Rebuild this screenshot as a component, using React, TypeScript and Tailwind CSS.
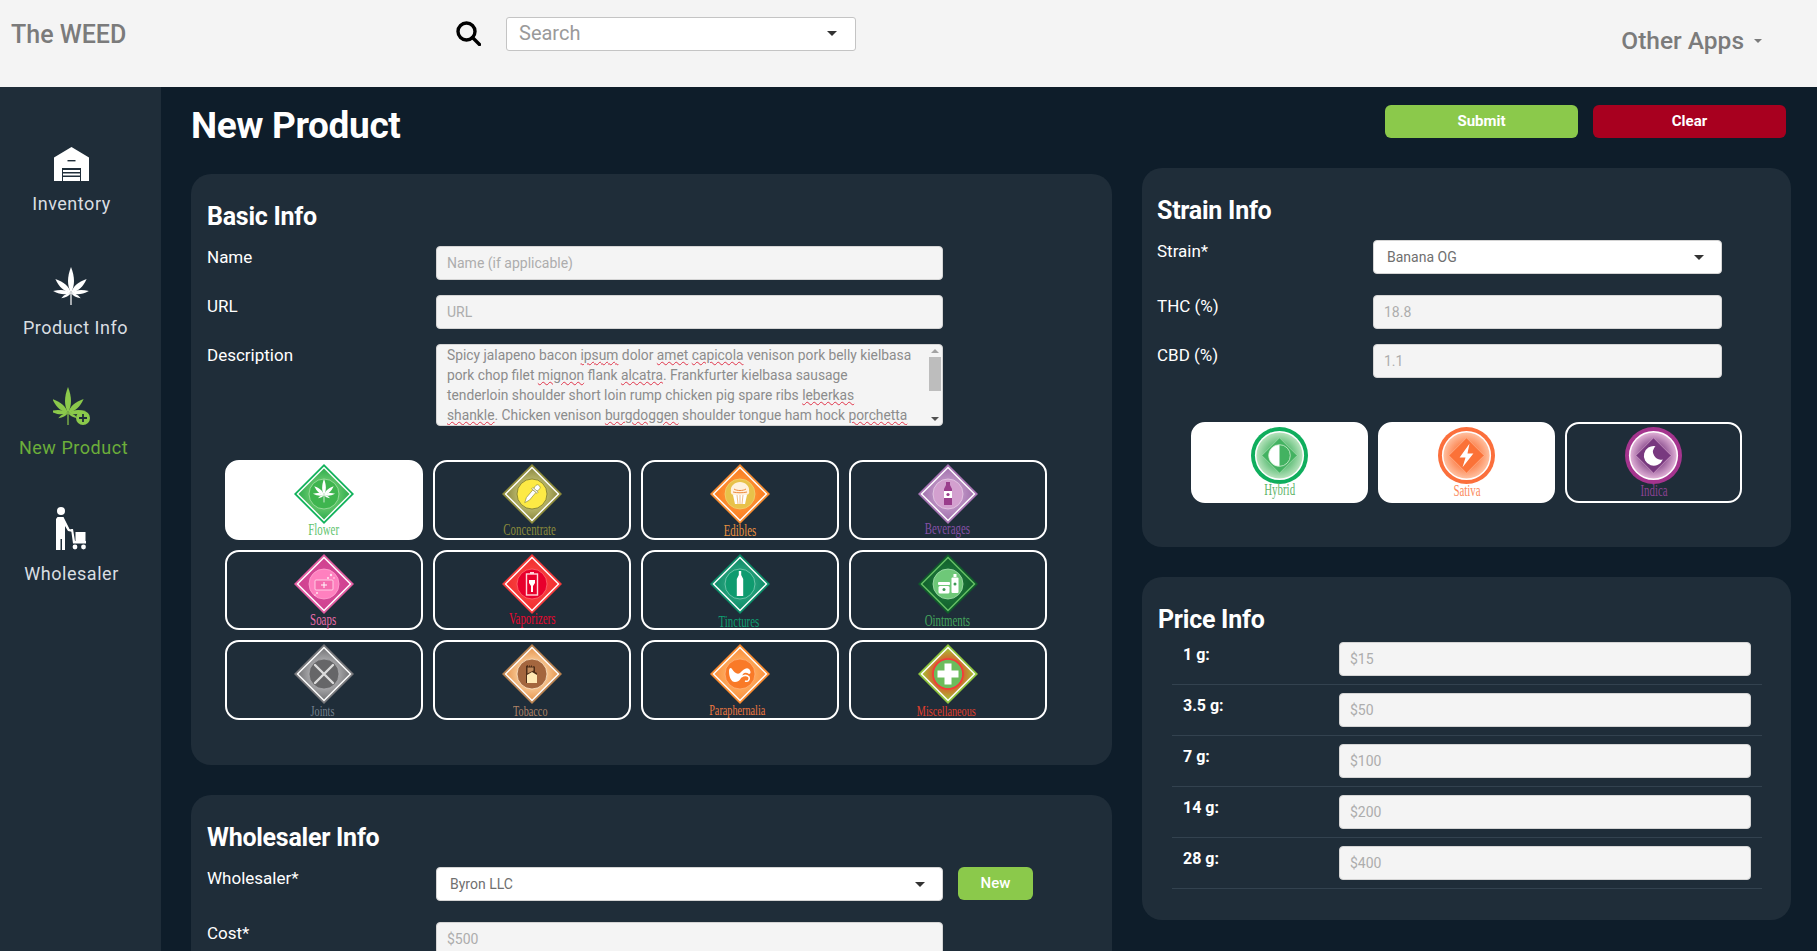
import type { ReactNode } from "react";

const sans = "font-['Roboto',sans-serif]";

function Leaf({ x, y, s, color }: { x: number; y: number; s: number; color: string }) {
	const blades = [
		[0, 26, 4],
		[-48, 21, 3.6],
		[48, 21, 3.6],
		[-84, 18, 2.8],
		[84, 18, 2.8],
		[-118, 11, 1.7],
		[118, 11, 1.7],
	];
	return (
		<g transform={`translate(${x} ${y}) scale(${s})`} fill={color}>
			{blades.map(([a, l, w]) => (
				<path
					key={a}
					transform={`rotate(${a})`}
					d={`M0 0C${-w} ${-l * 0.3} ${-w} ${-l * 0.6} 0 ${-l}C${w} ${-l * 0.6} ${w} ${-l * 0.3} 0 0Z`}
				/>
			))}
			<rect x="-0.6" y="0" width="1.2" height="12" />
		</g>
	);
}

function Badge(props: {
	id: string;
	outer: string;
	line?: string;
	inner: string;
	edge: string;
	disc: string;
	ring: string;
	children: ReactNode;
}) {
	const { id, outer, line = "#ffffff", inner, edge, disc, ring, children } = props;
	return (
		<svg viewBox="0 0 60 60" className="h-[60px] w-[60px] shrink-0">
			<defs>
				<radialGradient id={id}>
					<stop offset="30%" stopColor={inner} />
					<stop offset="100%" stopColor={edge} />
				</radialGradient>
			</defs>
			<polygon points="30,0 60,30 30,60 0,30" fill={outer} />
			<polygon points="30,2.5 57.5,30 30,57.5 2.5,30" fill={line} />
			<polygon points="30,4.5 55.5,30 30,55.5 4.5,30" fill={`url(#${id})`} />
			<circle cx="30" cy="30" r="15" fill={disc} stroke={ring} strokeWidth="0.8" />
			{children}
		</svg>
	);
}

const tiles = [
	{
		name: "Flower",
		active: true,
		text: "text-[#5fc46f]",
		label: "text-[16px] mt-[-2px]",
		badge: (
			<Badge id="b-flower" outer="#0fb25a" inner="#7ed27a" edge="#2fae4e" disc="#3fb54f" ring="#a5dfa5">
				<Leaf x={30} y={31} s={0.62} color="#ffffff" />
			</Badge>
		),
	},
	{
		name: "Concentrate",
		text: "text-[#8b8a3c]",
		label: "text-[16px] mt-[-2px] ml-[-4px]",
		badge: (
			<Badge id="b-conc" outer="#8d8a3a" inner="#cfcd80" edge="#8f8c44" disc="#fdea45" ring="#77762f">
				<g transform="rotate(40 30 30)" fill="#ffffff" stroke="#77762f" strokeWidth="0.5">
					<rect x="27.5" y="19" width="5" height="6" rx="2" />
					<rect x="26.5" y="24.5" width="7" height="1.8" />
					<path d="M28 26.3h4v10l-2 5-2-5z" />
				</g>
			</Badge>
		),
	},
	{
		name: "Edibles",
		text: "text-[#e8903f]",
		label: "text-[16px] mt-[-1px]",
		badge: (
			<Badge id="b-edi" outer="#f58a2f" inner="#ff9a3a" edge="#fb7c22" disc="#e8c24a" ring="#f2d070">
				<path d="M21 27c-1-5 4-9 9-9s10 4 9 9c1 3-2 4-3 4H24c-1 0-4-1-3-4z" fill="#fff1dd" />
				<path d="M24 25c3 2 9 2 12 0M23 28c4 1 10 1 14 0" stroke="#ef8a3c" strokeWidth="1" fill="none" />
				<path d="M23 31h14l-2 9H25z" fill="#ffffff" />
				<path d="M27 31l1 9M30 31v9M33 31l-1 9" stroke="#e8a050" strokeWidth="0.7" />
			</Badge>
		),
	},
	{
		name: "Beverages",
		text: "text-[#8450a6]",
		label: "text-[16px] mt-[-3px] ml-[-2px]",
		badge: (
			<Badge id="b-bev" outer="#a874b4" inner="#c9a0ce" edge="#a374ae" disc="#d3a0cf" ring="#e6cbe6">
				<path d="M28 18h4v3l2 4v16h-8V25l2-4z" fill="#9a3d8c" />
				<rect x="26" y="27" width="8" height="7" fill="#ffffff" />
				<circle cx="30" cy="30.5" r="1.6" fill="#9a3d8c" />
			</Badge>
		),
	},
	{
		name: "Soaps",
		text: "text-[#ea6cab]",
		label: "text-[16px] mt-[-2px] ml-[-2px]",
		badge: (
			<Badge id="b-soap" outer="#e35ca2" inner="#d44a98" edge="#d0408f" disc="#ff80bf" ring="#ffa7d3">
				<rect x="21" y="26" width="18" height="10" rx="1" fill="#f56cae" stroke="#ffd7ea" strokeWidth="0.9" />
				<path d="M30 28v6M27 31h6" stroke="#ffffff" strokeWidth="1" />
				<circle cx="37" cy="21" r="1.2" fill="#ffe4f1" />
				<circle cx="34" cy="24" r="1" fill="#ffe4f1" />
				<circle cx="40" cy="24" r="0.8" fill="#ffe4f1" />
				<circle cx="23" cy="39" r="1" fill="#ffe4f1" />
				<circle cx="21" cy="41" r="0.7" fill="#ffe4f1" />
			</Badge>
		),
	},
	{
		name: "Vaporizers",
		text: "text-[#e8062f]",
		label: "text-[16px] mt-[-3px]",
		badge: (
			<Badge id="b-vape" outer="#f53a3a" inner="#f54545" edge="#f42e2e" disc="#e8002c" ring="#ff6a72">
				<rect x="28" y="18" width="4" height="2" fill="#ffd5da" />
				<rect x="24.5" y="20" width="11" height="21" fill="none" stroke="#ffd5da" strokeWidth="1.4" />
				<path d="M27 26h6v3l-2 3v6h-2v-6l-2-3z" fill="#ffffff" />
			</Badge>
		),
	},
	{
		name: "Tinctures",
		text: "text-[#0f9e70]",
		label: "text-[16px] mt-0 ml-[-2px]",
		badge: (
			<Badge id="b-tinc" outer="#0b8a66" inner="#32a884" edge="#0e8d68" disc="#0f9b6f" ring="#7fcdb4">
				<path d="M28.8 17h2.4v4l2 4v17h-6.4V25l2-4z" fill="#ffffff" />
			</Badge>
		),
	},
	{
		name: "Ointments",
		text: "text-[#44a45c]",
		label: "text-[16px] mt-[-1px] ml-[-2px]",
		badge: (
			<Badge id="b-oint" outer="#0e5a2a" line="#66c266" inner="#1d7a3b" edge="#12602c" disc="#6ec878" ring="#a7e0ae">
				<rect x="20" y="28" width="12" height="3" rx="1" fill="#ffffff" />
				<rect x="20.5" y="32" width="11" height="7.5" rx="1.5" fill="#ffffff" />
				<circle cx="26" cy="35.5" r="1.5" fill="#3f9a56" />
				<rect x="35.5" y="20" width="3" height="3" fill="#ffffff" />
				<rect x="33.5" y="23.5" width="7" height="15.5" rx="1" fill="#ffffff" />
				<circle cx="37" cy="30" r="1.5" fill="#3f9a56" />
			</Badge>
		),
	},
	{
		name: "Joints",
		text: "text-[#75808f]",
		label: "text-[15px] mt-[-1px] ml-[-2px]",
		badge: (
			<Badge id="b-joint" outer="#77777b" inner="#c0c0c2" edge="#77777a" disc="#666668" ring="#aaaaac">
				<path d="M21 21l18 18M39 21L21 39" stroke="#dddddd" strokeWidth="2.4" strokeLinecap="round" />
			</Badge>
		),
	},
	{
		name: "Tobacco",
		text: "text-[#b08468]",
		label: "text-[15px] mt-[-1px] ml-[-3px]",
		badge: (
			<Badge id="b-tob" outer="#b9814f" inner="#ffdcb0" edge="#e89a55" disc="#a4663e" ring="#ffe7c9">
				<path d="M24 22l2-1v2l2-2v2l2-2v2l2-1 1 1v5l2 1v10H24z" fill="#4c2c17" />
				<path d="M25 31l5-3 5 3v8H25z" fill="#ffe9b5" />
				<path d="M25.5 23.5h6v3l-6 3z" fill="#c08a5c" />
			</Badge>
		),
	},
	{
		name: "Paraphernalia",
		text: "text-[#ee7840]",
		label: "text-[15px] mt-[-2px] ml-[-6px]",
		badge: (
			<Badge id="b-para" outer="#f98a2e" inner="#ffb468" edge="#fb9240" disc="#f97a28" ring="#ffb27c">
				<path
					d="M19 27c0-3 2-4 3-2 2 3 5 6 8 4 3-3 6-6 9-4 2 2 2 5 0 5-2-1-4-2-6 0-2 4-3 8-8 8-4 0-6-5-6-11z"
					fill="#ffffff"
				/>
				<path d="M31 33c3-2 6-2 8 0 1 3-1 5-4 4" stroke="#ffffff" strokeWidth="1.6" fill="none" />
			</Badge>
		),
	},
	{
		name: "Miscellaneous",
		text: "text-[#e23f2c]",
		label: "text-[15px] mt-[-1px] ml-[-4px]",
		badge: (
			<Badge id="b-misc" outer="#8fc63e" inner="#f02a2a" edge="#a6c034" disc="#6cbc5c" ring="#f53b3b">
				<circle cx="30" cy="30" r="15" fill="none" stroke="#f53b3b" strokeWidth="1.6" />
				<path d="M26.5 19.5h7v7h7v7h-7v7h-7v-7h-7v-7h7z" fill="#ffffff" />
			</Badge>
		),
	},
];

function StrainBadge(props: { id: string; outer: string; inner: string; diamond: string; children: ReactNode }) {
	const { id, outer, inner, diamond, children } = props;
	return (
		<svg viewBox="0 0 58 58" className="h-[57px] w-[57px] shrink-0">
			<defs>
				<radialGradient id={id}>
					<stop offset="35%" stopColor={diamond} />
					<stop offset="100%" stopColor={inner} />
				</radialGradient>
			</defs>
			<circle cx="29" cy="29" r="29" fill={outer} />
			<circle cx="29" cy="29" r="25" fill="#ffffff" />
			<circle cx="29" cy="29" r="23.5" fill={`url(#${id})`} />
			<polygon points="29,11 47,29 29,47 11,29" fill={diamond} stroke={inner} strokeWidth="0.6" />
			{children}
		</svg>
	);
}

const strains = [
	{
		name: "Hybrid",
		active: true,
		text: "text-[#5fb56a]",
		label: "mt-[-2px]",
		badge: (
			<StrainBadge id="s-hyb" outer="#0fae5d" inner="#b7e3bd" diamond="#43b261">
				<path d="M29 18a11 11 0 0 0 0 22z" fill="#ffffff" />
				<circle cx="29" cy="29" r="11" fill="none" stroke="#d5f0d5" strokeWidth="0.8" />
			</StrainBadge>
		),
	},
	{
		name: "Sativa",
		active: true,
		text: "text-[#fb8a5c]",
		label: "mt-[-1px]",
		badge: (
			<StrainBadge id="s-sat" outer="#fb6f3c" inner="#ffc0a0" diamond="#fb7238">
				<path d="M32 17L22 31h6l-3 10 11-14h-6z" fill="#ffffff" />
			</StrainBadge>
		),
	},
	{
		name: "Indica",
		text: "text-[#8a4292]",
		label: "mt-[-1px]",
		badge: (
			<StrainBadge id="s-ind" outer="#a5348e" inner="#e0b0d6" diamond="#78397f">
				<path d="M31 19.5A10 10 0 1 0 38.500 33A8 8 0 0 1 31 19.500Z" fill="#ffffff" />
			</StrainBadge>
		),
	},
];

function TextField({ placeholder, width }: { placeholder: string; width: string }) {
	return (
		<input
			readOnly
			placeholder={placeholder}
			className={`${width} h-[34px] rounded-[4px] border border-[#d4d4d4] bg-[#f4f4f4] px-[10px] text-[14px] text-[#8c8c8c] outline-none placeholder:text-[#adadad]`}
		/>
	);
}

function SelectField({ value, width }: { value: string; width: string }) {
	return (
		<div className={`${width} flex h-[34px] items-center justify-between rounded-[4px] border border-[#d4d4d4] bg-white pl-[13px] pr-[17px] text-[14px] text-[#6f6f6f]`}>
			<span>{value}</span>
			<span className="h-0 w-0 border-x-[5px] border-t-[5px] border-x-transparent border-t-[#333333]" />
		</div>
	);
}

function Panel({ title, pad = "pl-4", children }: { title: string; pad?: string; children: ReactNode }) {
	return (
		<section className={`rounded-[20px] bg-[#1f2d39] pr-4 pt-[25px] ${pad}`}>
			<h2 className="mb-[-1px] text-[25px] font-bold leading-9 tracking-[-0.01em] text-white">{title}</h2>
			{children}
		</section>
	);
}

function Row({ label, width, children, className }: { label: string; width: string; children: ReactNode; className: string }) {
	return (
		<div className={`flex items-start ${className}`}>
			<label className={`${width} shrink-0 pt-px text-[17px] leading-5 text-white`}>{label}</label>
			{children}
		</div>
	);
}

function Squiggle({ children }: { children: ReactNode }) {
	return <span className="underline decoration-[#e0344a] decoration-wavy decoration-1 underline-offset-1">{children}</span>;
}

function Sidebar() {
	return (
		<aside className="flex w-[161px] shrink-0 flex-col items-center bg-[#1f2d39] pr-[18px] pt-[60px]">
			<div className="flex h-[120px] flex-col items-center gap-[11px]">
				<svg viewBox="0 0 35 34" className="h-[34px] w-[35px]" fill="#ffffff">
					<path d="M0 10.5L17.5 0 35 10.5V34H27V21H8V34H0Z" />
					<rect x="13.5" y="13" width="8" height="1.4" fill="#1f2d39" />
					<path d="M9 23h17v2H9zM9 26.5h17v2H9zM9 30h17v4H9z" />
				</svg>
				<span className="text-[18px] leading-6 tracking-[0.03em] text-[#d9dee2]">Inventory</span>
			</div>
			<div className="flex h-[120px] flex-col items-center gap-[11px]">
				<svg viewBox="0 0 36 38" className="h-[38px] w-[36px]">
					<Leaf x={18} y={26} s={1} color="#ffffff" />
				</svg>
				<span className="ml-2 text-[18px] leading-6 tracking-[0.03em] text-[#d9dee2]">Product Info</span>
			</div>
			<div className="flex h-[120px] flex-col items-center gap-[11px]">
				<svg viewBox="0 0 37 38" className="h-[38px] w-[37px]">
					<Leaf x={15} y={26} s={1} color="#8bc94b" />
					<circle cx="30" cy="31" r="7" fill="#8bc94b" />
					<path d="M30 27v8M26 31h8" stroke="#1f2d39" strokeWidth="1.8" />
				</svg>
				<span className="ml-1 text-[18px] leading-6 tracking-[0.03em] text-[#6cae3a]">New Product</span>
			</div>
			<div className="flex h-[120px] flex-col items-center gap-3">
				<svg viewBox="0 0 32 43" className="h-[43px] w-[32px]" fill="#ffffff">
					<circle cx="6" cy="4" r="4" />
					<path d="M2.5 10h6l6 12 3.5 1v2l-5-1-3-5v24H7V32H5.500V43H1V12z" />
					<path d="M16 22l2 0 2 12h11v2.500H18z" />
					<rect x="20.500" y="25" width="10" height="9" />
					<circle cx="20" cy="40" r="2.400" />
					<circle cx="28.500" cy="40" r="2.400" />
				</svg>
				<span className="text-[18px] leading-6 tracking-[0.03em] text-[#d9dee2]">Wholesaler</span>
			</div>
		</aside>
	);
}

export default function App() {
	return (
		<div className={`${sans} flex h-screen flex-col overflow-hidden bg-[#0e1d2a]`}>
			<header className="flex h-[87px] shrink-0 items-start bg-[#f4f4f4]">
				<div className="mt-[19px] w-[456px] pl-[11px] text-[25px] font-medium leading-8 text-[#7b7b7b]">The WEED</div>
				<svg viewBox="0 0 25 25" className="mt-[21px] h-[25px] w-[25px]" fill="none" stroke="#000000" strokeWidth="3.4">
					<circle cx="10.500" cy="10.500" r="8.500" />
					<path d="M16.500 16.500L23.500 23.500" strokeLinecap="round" />
				</svg>
				<div className="ml-[25px] mt-[17px] flex h-[34px] w-[350px] items-center justify-between rounded-[3px] border border-[#c4c4c4] bg-white pb-[2px] pl-3 pr-[18px] text-[20px] text-[#9a9a9a]">
					<span>Search</span>
					<span className="h-0 w-0 border-x-[5px] border-t-[5px] border-x-transparent border-t-[#333333]" />
				</div>
				<div className="ml-auto mr-[55px] mt-[25px] flex items-center gap-[10px] text-[24.500px] font-medium leading-8 text-[#7b7b7b]">
					<span>Other Apps</span>
					<span className="h-0 w-0 border-x-[4px] border-t-[4px] border-x-transparent border-t-[#7b7b7b]" />
				</div>
			</header>

			<div className="flex min-h-0 flex-1">
				<Sidebar />

				<main className="flex min-w-0 flex-1 items-start">
					<div className="ml-[30px] w-[921px] shrink-0">
						<h1 className="flex h-[87px] items-center pb-[10px] text-[37px] font-bold tracking-[-0.01em] text-white">New Product</h1>

						<Panel title="Basic Info">
							<div className="mt-3 flex flex-col gap-[15px]">
								<Row label="Name" width="w-[229px]" className="">
									<TextField placeholder="Name (if applicable)" width="w-[507px]" />
								</Row>
								<Row label="URL" width="w-[229px]" className="">
									<TextField placeholder="URL" width="w-[507px]" />
								</Row>
								<Row label="Description" width="w-[229px]" className="">
									<div className="flex h-[82px] w-[507px] overflow-hidden rounded-[4px] border border-[#d4d4d4] bg-[#f4f4f4]">
										<div className="flex-1 whitespace-nowrap pl-[10px] text-[13.800px] leading-5 text-[#8c8c8c]">
											<div>
												Spicy jalapeno bacon <Squiggle>ipsum</Squiggle> dolor <Squiggle>amet</Squiggle>{" "}
												<Squiggle>capicola</Squiggle> venison pork belly kielbasa
											</div>
											<div>
												pork chop filet <Squiggle>mignon</Squiggle> flank <Squiggle>alcatra</Squiggle>. Frankfurter kielbasa sausage
											</div>
											<div>
												tenderloin shoulder short loin rump chicken pig spare ribs <Squiggle>leberkas</Squiggle>
											</div>
											<div>
												<Squiggle>shankle</Squiggle>. Chicken venison <Squiggle>burgdoggen</Squiggle> shoulder tongue ham hock{" "}
												<Squiggle>porchetta</Squiggle>
											</div>
										</div>
										<div className="flex w-[14px] shrink-0 flex-col items-center pb-1 pt-1">
											<span className="h-0 w-0 border-x-[4px] border-b-[4px] border-x-transparent border-b-[#a3a3a3]" />
											<span className="mt-1 h-[34px] w-[12px] bg-[#bdbdbd]" />
											<span className="mt-auto h-0 w-0 border-x-[4px] border-t-[4px] border-x-transparent border-t-[#505050]" />
										</div>
									</div>
								</Row>
							</div>

							<div className="ml-[18px] mt-[34px] grid w-[822px] grid-cols-4 gap-[10px] pb-[45px]">
								{tiles.map((t) => (
									<div
										key={t.name}
										className={`flex h-[80px] flex-col items-center rounded-[14px] border-2 border-white ${t.active ? "bg-white" : ""}`}
									>
										<div className="mt-[2px]">{t.badge}</div>
										<span className={`inline-block scale-x-[0.68] whitespace-nowrap font-['Liberation_Serif',serif] leading-4 ${t.text} ${t.label}`}>
											{t.name}
										</span>
									</div>
								))}
							</div>
						</Panel>

						<div className="mt-[30px]">
							<Panel title="Wholesaler Info">
								<Row label="Wholesaler*" width="w-[229px]" className="mt-3">
									<SelectField value="Byron LLC" width="w-[507px]" />
									<button className="ml-[15px] h-[33px] w-[75px] rounded-[6px] bg-[#8bc94b] text-[15px] font-medium text-white">New</button>
								</Row>
								<Row label="Cost*" width="w-[229px]" className="mt-[21px] pb-10">
									<TextField placeholder="$500" width="w-[507px]" />
								</Row>
							</Panel>
						</div>
					</div>

					<div className="ml-[30px] w-[649px] shrink-0">
						<div className="flex h-[81px] items-start gap-[15px] pl-[243px] pt-[18px]">
							<button className="h-[33px] w-[193px] rounded-[6px] bg-[#8bc94b] text-[15px] font-bold text-white">Submit</button>
							<button className="h-[33px] w-[193px] rounded-[6px] bg-[#a8001f] text-[15px] font-bold text-white">Clear</button>
						</div>

						<Panel title="Strain Info" pad="pl-[15px]">
							<Row label="Strain*" width="w-[216px]" className="mt-3">
								<SelectField value="Banana OG" width="w-[349px]" />
							</Row>
							<Row label="THC (%)" width="w-[216px]" className="mt-[21px]">
								<TextField placeholder="18.8" width="w-[349px]" />
							</Row>
							<Row label="CBD (%)" width="w-[216px]" className="mt-[15px]">
								<TextField placeholder="1.1" width="w-[349px]" />
							</Row>
							<div className="ml-[34px] mt-[44px] grid w-[551px] grid-cols-3 gap-[10px] pb-[44px]">
								{strains.map((s) => (
									<div
										key={s.name}
										className={`flex h-[81px] flex-col items-center rounded-[14px] border-2 border-white ${s.active ? "bg-white" : ""}`}
									>
										<div className="mt-[3px]">{s.badge}</div>
										<span className={`inline-block scale-x-[0.68] whitespace-nowrap font-['Liberation_Serif',serif] text-[16px] leading-4 ${s.text} ${s.label}`}>
											{s.name}
										</span>
									</div>
								))}
							</div>
						</Panel>

						<div className="mt-[30px]">
							<Panel title="Price Info">
								<div className="ml-[14px] mt-[5px] w-[590px] pb-[23px]">
									{[
										["1 g:", "$15"],
										["3.5 g:", "$50"],
										["7 g:", "$100"],
										["14 g:", "$200"],
										["28 g:", "$400"],
									].map(([weight, price]) => (
										<div key={weight} className="mb-2 flex items-start border-b border-[#33424f] pb-2">
											<label className="w-[167px] shrink-0 pl-[11px] pt-[3px] text-[16px] font-bold leading-5 text-white">{weight}</label>
											<TextField placeholder={price} width="w-[412px]" />
										</div>
									))}
								</div>
							</Panel>
						</div>
					</div>
				</main>
			</div>
		</div>
	);
}
